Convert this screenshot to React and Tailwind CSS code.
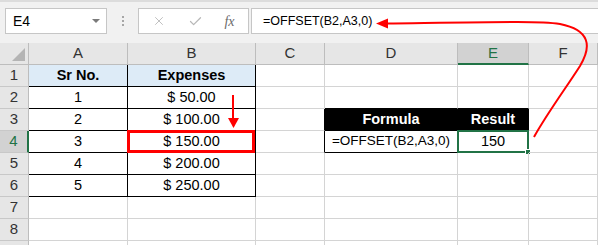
import { X, Check } from "lucide-react";

const colW = ["w-[99px]", "w-[128px]", "w-[69px]", "w-[133px]", "w-[71px]", "w-[69px]"];
const letters = ["A", "B", "C", "D", "E", "F"];

// one spreadsheet row = list of cell specs for columns A..F
const blank = () => ({});
const rows = [
  [
    { text: "Sr No.", cls: "bg-[#ddebf7] font-bold", r: "black", b: "black" },
    { text: "Expenses", cls: "bg-[#ddebf7] font-bold", r: "black", b: "black" },
    blank(),
    blank(),
    blank(),
    blank(),
  ],
  [
    { text: "1", r: "black", b: "black" },
    { text: "$ 50.00", r: "black", b: "black" },
    blank(),
    { b: "black" },
    { b: "black" },
    blank(),
  ],
  [
    { text: "2", r: "black", b: "black" },
    { text: "$ 100.00", r: "black", b: "black" },
    { r: "black" },
    { text: "Formula", cls: "bg-black text-white font-bold", r: "black", b: "black" },
    { text: "Result", cls: "bg-black text-white font-bold", r: "black", b: "black" },
    blank(),
  ],
  [
    { text: "3", r: "black", b: "black" },
    { text: "$ 150.00", r: "black", b: "black", red: true },
    { r: "black" },
    { text: "=OFFSET(B2,A3,0)", size: "text-[13.5px]", r: "black", b: "black" },
    { text: "150", active: true },
    blank(),
  ],
  [
    { text: "4", r: "black", b: "black" },
    { text: "$ 200.00", r: "black", b: "black" },
    blank(),
    blank(),
    blank(),
    blank(),
  ],
  [
    { text: "5", r: "black", b: "black" },
    { text: "$ 250.00", r: "black", b: "black" },
    blank(),
    blank(),
    blank(),
    blank(),
  ],
  [blank(), blank(), blank(), blank(), blank(), blank()],
  [blank(), blank(), blank(), blank(), blank(), blank()],
  [blank(), blank(), blank(), blank(), blank(), blank()],
];

function Cell({ spec, width }) {
  const r = spec.r === "black" ? "border-r-black" : "border-r-[#d4d4d4]";
  const b = spec.b === "black" ? "border-b-black" : "border-b-[#d4d4d4]";
  const size = spec.size || "text-[14.5px]";
  return (
    <div
      className={`relative h-[22px] shrink-0 border-r border-b ${r} ${b} ${width} flex items-center justify-center ${size} ${spec.cls || "text-black"}`}
    >
      {spec.text}
      {spec.red && (
        <div className="absolute -left-px -top-px w-[128px] h-[23px] border-[3px] border-[#ff0000]" />
      )}
      {spec.active && (
        <>
          <div className="absolute -left-px -top-px w-[72px] h-[23px] border-2 border-[#217346]" />
          <div className="absolute -right-[3px] -bottom-[3px] w-[6px] h-[6px] bg-[#217346] border border-white" />
        </>
      )}
    </div>
  );
}

function Toolbar() {
  return (
    <div className="h-[43px] bg-[#f1f1f1] border-t-2 border-t-[#dcdcdc] flex items-start pt-[6px] pl-[5px]">
      <div className="w-[102px] h-[26px] bg-white border border-[#c6c6c6] flex items-center justify-between pl-[7px] pr-[6px]">
        <span className="text-[14px] text-black">E4</span>
        <svg width="8" height="5" viewBox="0 0 8 5">
          <path d="M0 0 L8 0 L4 4 Z" fill="#7a7a7a" />
        </svg>
      </div>
      <div className="w-[31px] h-[26px] flex flex-col items-center justify-center gap-[2px]">
        <span className="w-[2px] h-[2px] bg-[#a6a6a6]" />
        <span className="w-[2px] h-[2px] bg-[#a6a6a6]" />
        <span className="w-[2px] h-[2px] bg-[#a6a6a6]" />
      </div>
      <div className="w-[111px] h-[26px] bg-white border border-[#c6c6c6] flex items-center">
        <div className="w-[40px] flex justify-center">
          <X size={14} strokeWidth={1.5} color="#b8b8b8" />
        </div>
        <div className="w-[32px] flex justify-center">
          <Check size={15} strokeWidth={2} color="#b8b8b8" />
        </div>
        <div className="w-[37px] flex justify-center">
          <span className="italic text-[14px] text-[#6b6b6b] font-['Liberation_Serif',serif]">fx</span>
        </div>
      </div>
      <div className="ml-[2px] flex-1 h-[26px] bg-white border-y border-l border-[#c6c6c6] flex items-center pl-[11px]">
        <span className="text-[12.5px] text-black">=OFFSET(B2,A3,0)</span>
      </div>
    </div>
  );
}

function ColumnHeader() {
  return (
    <div className="flex h-[22px]">
      <div className="w-[29px] shrink-0 bg-[#e6e6e6] border-r border-b border-[#bdbdbd] relative">
        <svg className="absolute right-[3px] bottom-[3px]" width="13" height="13" viewBox="0 0 13 13">
          <path d="M13 0 L13 13 L0 13 Z" fill="#b4b4b4" />
        </svg>
      </div>
      {letters.map((l, i) =>
        l === "E" ? (
          <div
            key={l}
            className={`${colW[i]} shrink-0 bg-[#d2d2d2] border-r border-r-[#bdbdbd] border-b-2 border-b-[#217346] flex items-center justify-center text-[15px] text-[#217346]`}
          >
            {l}
          </div>
        ) : (
          <div
            key={l}
            className={`${colW[i]} shrink-0 bg-[#e6e6e6] border-r border-b border-[#bdbdbd] flex items-center justify-center text-[15px] text-[#333]`}
          >
            {l}
          </div>
        )
      )}
    </div>
  );
}

export default function App() {
  return (
    <div className="relative w-[598px] h-[245px] overflow-hidden bg-white font-['Liberation_Sans',Arial,sans-serif]">
      <Toolbar />
      <ColumnHeader />
      {rows.map((row, ri) => (
        <div key={ri} className="flex">
          {ri === 3 ? (
            <div className="w-[29px] h-[22px] shrink-0 bg-[#d2d2d2] border-r-2 border-r-[#217346] border-b border-b-[#c8c8c8] flex items-center justify-center text-[15px] text-[#217346]">
              {ri + 1}
            </div>
          ) : (
            <div className="w-[29px] h-[22px] shrink-0 bg-[#e6e6e6] border-r border-r-[#bdbdbd] border-b border-b-[#c8c8c8] flex items-center justify-center text-[15px] text-[#333]">
              {ri < 8 ? ri + 1 : null}
            </div>
          )}
          {row.map((spec, ci) => (
            <Cell key={ci} spec={spec} width={colW[ci]} />
          ))}
        </div>
      ))}

      <svg className="absolute inset-0 pointer-events-none" width="598" height="245" viewBox="0 0 598 245">
        {/* down arrow to B4 */}
        <line x1="233" y1="95" x2="233" y2="119" stroke="#ff0000" strokeWidth="2" />
        <path d="M228 118 L239 118 L233.5 128 Z" fill="#ff0000" />
        {/* curve from E4 back to the formula bar */}
        <path
          d="M534 137 C548 112, 566 88, 580 66 C592 46, 590 30, 560 24 C540 21, 500 22, 386 23.5"
          fill="none"
          stroke="#ff0000"
          strokeWidth="2"
        />
        <path d="M376 23.5 L388 18.5 L388 28.5 Z" fill="#ff0000" />
      </svg>
    </div>
  );
}
